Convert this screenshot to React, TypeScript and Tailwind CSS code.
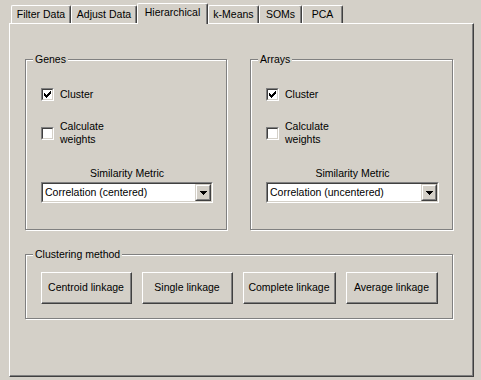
import React from "react";

const tabs = [
  { label: "Filter Data", w: "w-[60px]" },
  { label: "Adjust Data", w: "w-[66px]" },
  { label: "Hierarchical", w: "w-[71px]", active: true },
  { label: "k-Means", w: "w-[51px]" },
  { label: "SOMs", w: "w-[43px]" },
  { label: "PCA", w: "w-[41px]" },
];

// 7x7 check glyph, classic style
const tick = [
  "......X",
  ".....XX",
  "X...XXX",
  "XX.XXX.",
  "XXXXX..",
  ".XXX...",
  "..X....",
];

function Checkbox({ checked, label }: { checked?: boolean; label: React.ReactNode }) {
  return (
    <div className="flex items-center gap-[6px]">
      <div className="w-[13px] h-[13px] shrink-0 border-t border-l border-[#808080] border-r border-b border-r-white border-b-white">
        <div className="w-[11px] h-[11px] bg-white border-t border-l border-[#404040] border-r border-b border-r-[#d4d0c8] border-b-[#d4d0c8] p-[1px]">
          {checked && (
            <svg width="7" height="7" viewBox="0 0 7 7" shapeRendering="crispEdges" className="block">
              {tick.map((row, y) =>
                row.split("").map((c, x) =>
                  c === "X" ? <rect key={`${x}-${y}`} x={x} y={y} width="1" height="1" fill="#000" /> : null
                )
              )}
            </svg>
          )}
        </div>
      </div>
      <div className="leading-[13px]">{label}</div>
    </div>
  );
}

function Combo({ value, w }: { value: string; w: string }) {
  return (
    <div className={`${w} h-[21px] border-t border-l border-[#808080] border-r border-b border-r-white border-b-white`}>
      <div className="h-full bg-white border-t border-l border-[#404040] border-r border-b border-r-[#d4d0c8] border-b-[#d4d0c8] flex items-center">
        <div className="flex-1 pl-[2px] leading-[13px] whitespace-nowrap">{value}</div>
        <div className="w-[16px] h-[17px] bg-[#d4d0c8] border-t border-l border-t-[#d4d0c8] border-l-[#d4d0c8] border-r border-b border-[#404040]">
          <div className="h-full border-t border-l border-white border-r border-b border-r-[#808080] border-b-[#808080] flex items-center justify-center">
            <svg width="7" height="4" viewBox="0 0 7 4" shapeRendering="crispEdges" className="block">
              <rect x="0" y="0" width="7" height="1" fill="#000" />
              <rect x="1" y="1" width="5" height="1" fill="#000" />
              <rect x="2" y="2" width="3" height="1" fill="#000" />
              <rect x="3" y="3" width="1" height="1" fill="#000" />
            </svg>
          </div>
        </div>
      </div>
    </div>
  );
}

function GroupBox({ title, className, children }: { title: string; className: string; children: React.ReactNode }) {
  return (
    <div className={`relative border border-[#808080] shadow-[inset_1px_1px_0_#fff,1px_1px_0_#fff] ${className}`}>
      <div className="absolute -top-[7px] left-[7px] px-[2px] bg-[#d4d0c8] leading-[13px]">{title}</div>
      {children}
    </div>
  );
}

function Button({ label, w }: { label: string; w: string }) {
  return (
    <div className={`${w} h-[32px] border-t border-l border-white border-r border-b border-r-[#404040] border-b-[#404040]`}>
      <div className="h-full border-r border-b border-[#808080] flex items-center justify-center leading-[13px] whitespace-nowrap">
        {label}
      </div>
    </div>
  );
}

function MetricPanel({ title, w, comboW, value }: { title: string; w: string; comboW: string; value: string }) {
  return (
    <GroupBox title={title} className={`${w} h-[171px] pl-[15px] pt-[28px]`}>
      <Checkbox checked label="Cluster" />
      <div className="mt-[19px]">
        <Checkbox
          label={
            <>
              Calculate
              <br />
              weights
            </>
          }
        />
      </div>
      <div className={`${comboW} mt-[21px] text-center leading-[13px]`}>Similarity Metric</div>
      <div className="mt-[2px]">
        <Combo value={value} w={comboW} />
      </div>
    </GroupBox>
  );
}

export default function App() {
  return (
    <div
      className="w-[481px] h-[380px] bg-[#d4d0c8] text-black text-[10.5px] overflow-hidden"
      style={{ fontFamily: '"Liberation Sans", Arial, sans-serif' }}
    >
      <div className="relative z-10 flex items-end h-[23px] pl-[11px]">
        {tabs.map((t) => (
          <div
            key={t.label}
            className={`${t.w} ${
              t.active ? "h-[21px] -mb-[1px]" : "h-[18px]"
            } bg-[#d4d0c8] border-l border-t border-white rounded-tl-[2px] rounded-tr-[2px] border-r border-r-[#404040] shadow-[inset_-1px_0_0_#808080] pt-[2px] text-center leading-[13px] whitespace-nowrap`}
          >
            {t.label}
          </div>
        ))}
      </div>

      <div className="ml-[9px] w-[465px] h-[354px] border-l border-t border-white border-r border-b border-r-[#404040] border-b-[#404040] shadow-[inset_-1px_-1px_0_#808080] pl-[15px] pt-[35px]">
        <div className="flex gap-[23px]">
          <MetricPanel title="Genes" w="w-[202px]" comboW="w-[172px]" value="Correlation (centered)" />
          <MetricPanel title="Arrays" w="w-[203px]" comboW="w-[173px]" value="Correlation (uncentered)" />
        </div>

        <GroupBox title="Clustering method" className="w-[428px] h-[65px] mt-[24px] pl-[15px] pt-[17px]">
          <div className="flex gap-[10px]">
            <Button label="Centroid linkage" w="w-[91px]" />
            <Button label="Single linkage" w="w-[91px]" />
            <Button label="Complete linkage" w="w-[93px]" />
            <Button label="Average linkage" w="w-[92px]" />
          </div>
        </GroupBox>
      </div>
    </div>
  );
}
